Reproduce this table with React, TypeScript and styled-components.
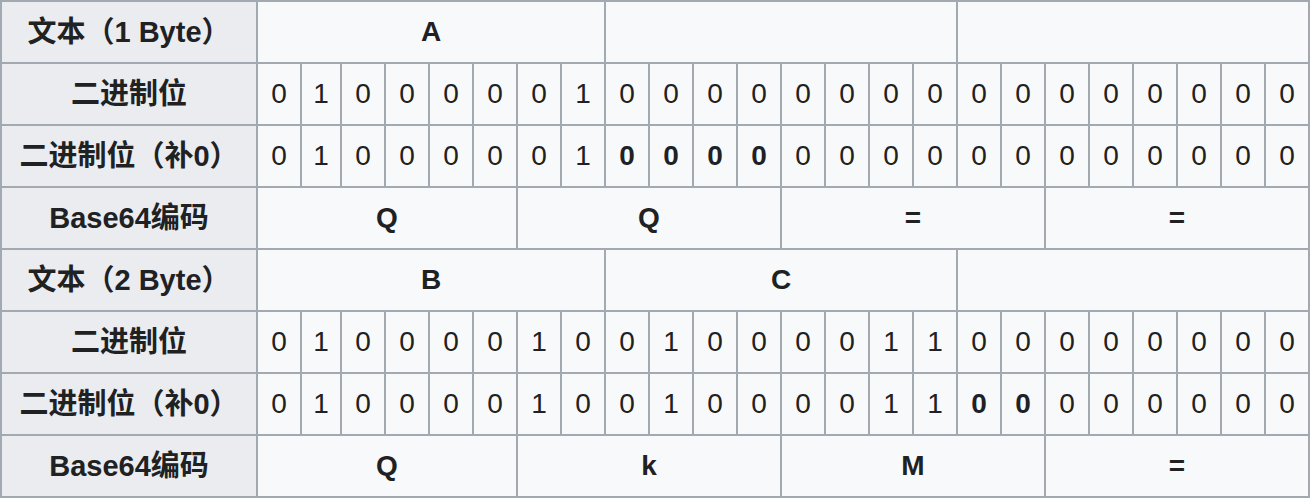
import React from "react";
import styled, { createGlobalStyle } from "styled-components";

const Global = createGlobalStyle`
  html, body { margin: 0; padding: 0; background: #ffffff; }
  body { font-family: "Liberation Sans", "Noto Sans CJK SC", sans-serif; color: #202122; }
`;

const Table = styled.div`
  display: grid;
  grid-template-columns: 254px 42px 38px repeat(22, 42px);
  grid-auto-rows: 60px;
  gap: 2px;
  padding: 2px;
  background: #a2a9b1;
  width: 1310px;
  box-sizing: border-box;
`;

const HeadCell = styled.div`
  background: #eaecf0;
  display: flex;
  align-items: center;
  justify-content: center;
  font-weight: bold;
  font-size: 29px;
  line-height: 1;
  padding-bottom: 0;
  box-sizing: border-box;
  white-space: nowrap;
`;

const Cell = styled.div<{ $span?: number; $bold?: boolean }>`
  grid-column: span ${(p) => p.$span ?? 1};
  background: #f8f9fa;
  display: flex;
  align-items: center;
  justify-content: center;
  font-size: 28px;
  font-weight: ${(p) => (p.$bold ? "bold" : "normal")};
  white-space: nowrap;
`;

type Block = {
  label: string;
  chars: string[];
  bits: string;
  boldFrom: number;
  boldTo: number;
  b64: string[];
};

const blocks: Block[] = [
  {
    label: "文本（1 Byte）",
    chars: ["A", "", ""],
    bits: "010000010000000000000000",
    boldFrom: 8,
    boldTo: 12,
    b64: ["Q", "Q", "=", "="],
  },
  {
    label: "文本（2 Byte）",
    chars: ["B", "C", ""],
    bits: "010000100100001100000000",
    boldFrom: 16,
    boldTo: 18,
    b64: ["Q", "k", "M", "="],
  },
];

export default function App() {
  return (
    <>
      <Global />
      <Table>
        {blocks.map((b, bi) => (
          <React.Fragment key={bi}>
            <HeadCell>{b.label}</HeadCell>
            {b.chars.map((c, i) => (
              <Cell key={"c" + i} $span={8} $bold>
                {c}
              </Cell>
            ))}
            <HeadCell>二进制位</HeadCell>
            {b.bits.split("").map((d, i) => (
              <Cell key={"b" + i}>{d}</Cell>
            ))}
            <HeadCell>二进制位（补0）</HeadCell>
            {b.bits.split("").map((d, i) => (
              <Cell key={"p" + i} $bold={i >= b.boldFrom && i < b.boldTo}>
                {d}
              </Cell>
            ))}
            <HeadCell>Base64编码</HeadCell>
            {b.b64.map((c, i) => (
              <Cell key={"e" + i} $span={6} $bold>
                {c}
              </Cell>
            ))}
          </React.Fragment>
        ))}
      </Table>
    </>
  );
}
